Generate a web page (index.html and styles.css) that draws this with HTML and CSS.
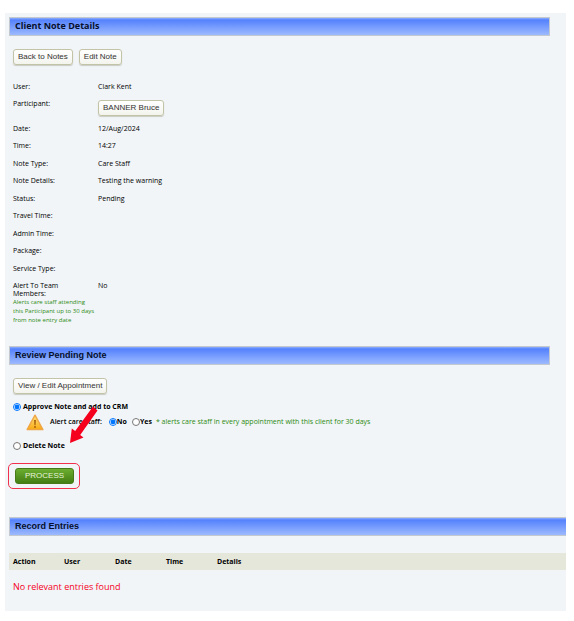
FILE: index.html
```
<!DOCTYPE html>
<html lang="en">
<head>
<meta charset="utf-8">
<title>Client Note Details</title>
<link rel="stylesheet" href="styles.css">
</head>
<body>
<div class="page">

  <h1 class="bar">Client Note Details</h1>
  <div class="actions">
    <button type="button" class="btn">Back to Notes</button>
    <button type="button" class="btn">Edit Note</button>
  </div>

  <table class="details">
    <tr><th>User:</th><td>Clark Kent</td></tr>
    <tr class="tall"><th>Participant:</th><td><button type="button" class="btn">BANNER Bruce</button></td></tr>
    <tr><th>Date:</th><td>12/Aug/2024</td></tr>
    <tr><th>Time:</th><td>14:27</td></tr>
    <tr><th>Note Type:</th><td>Care Staff</td></tr>
    <tr><th>Note Details:</th><td>Testing the warning</td></tr>
    <tr><th>Status:</th><td>Pending</td></tr>
    <tr><th>Travel Time:</th><td></td></tr>
    <tr><th>Admin Time:</th><td></td></tr>
    <tr><th>Package:</th><td></td></tr>
    <tr><th>Service Type:</th><td></td></tr>
    <tr>
      <th>Alert To Team<br>Members:
        <span class="help">Alerts care staff attending<br>this Participant up to 30 days<br>from note entry date</span>
      </th>
      <td>No</td>
    </tr>
  </table>

  <h2 class="bar">Review Pending Note</h2>
  <div class="actions">
    <button type="button" class="btn">View / Edit Appointment</button>
  </div>

  <form class="review">
    <div class="option">
      <input type="radio" id="approve" name="review" checked>
      <label for="approve">Approve Note and add to CRM</label>
    </div>
    <div class="option alert">
      <svg class="warning" viewBox="0 0 18 17" aria-hidden="true">
        <defs>
          <linearGradient id="amber" x1="0" y1="0" x2="0" y2="1">
            <stop offset="0" stop-color="#ffe680"/>
            <stop offset="1" stop-color="#f9a812"/>
          </linearGradient>
        </defs>
        <path d="M9 1.2 L16.9 15.6 H1.1 Z" fill="url(#amber)" stroke="#efa646" stroke-width="1.4" stroke-linejoin="round"/>
        <path d="M8.1 6 H9.9 L9.5 11.2 H8.5 Z" fill="#a55a08"/>
        <circle cx="9" cy="13" r="0.9" fill="#a55a08"/>
      </svg>
      <span class="question">Alert care staff:</span>
      <input type="radio" id="alert-no" name="alert" checked>
      <label for="alert-no">No</label>
      <input type="radio" id="alert-yes" name="alert">
      <label for="alert-yes">Yes</label>
      <span class="hint">* alerts care staff in every appointment with this client for 30 days</span>
    </div>
    <div class="option">
      <input type="radio" id="delete" name="review">
      <label for="delete">Delete Note</label>
    </div>
    <svg class="arrow" viewBox="0 0 29 38" aria-hidden="true">
      <path d="M24 0.5 L28.5 4.5 L11.2 29 L14.5 31.5 L1 37 L2.8 22.5 L6.2 25 Z" fill="#f5001d"/>
    </svg>
    <div class="highlight">
      <button type="button" class="process">PROCESS</button>
    </div>
  </form>

  <h2 class="bar wide">Record Entries</h2>
  <table class="entries">
    <thead>
      <tr><th>Action</th><th>User</th><th>Date</th><th>Time</th><th>Details</th></tr>
    </thead>
    <tbody>
      <tr><td colspan="5">No relevant entries found</td></tr>
    </tbody>
  </table>

</div>
</body>
</html>
```
FILE: styles.css
```
body {
  margin: 0;
  padding: 13px 8px 10px 5px;
  background: #fff;
  color: #000;
  font: 7px/8px "Trebuchet MS", "Open Sans", sans-serif;
}

.page {
  padding: 4px 0 17px 4px;
  background: #f1f5f8;
}

.bar {
  box-sizing: border-box;
  height: 19px;
  margin: 0 16px 0 0;
  padding: 0 5px;
  border: 1px solid #c3c9cf;
  background: linear-gradient(#8caeff 0, #5582fd 2px, #9dbafe 100%);
  color: #06102c;
  font: bold 9px/16px "Liberation Sans", Arial, sans-serif;
}

h1.bar {
  font-family: "Trebuchet MS", "Open Sans", sans-serif;
}

.bar.wide {
  margin-right: 0;
  border-right: 0;
}

.actions {
  display: flex;
  gap: 6px;
  padding: 13px 4px 0;
}

.btn {
  display: block;
  height: 16px;
  padding: 0 4px;
  border: 1px solid #c3c3a8;
  border-radius: 3px;
  background: linear-gradient(#fff, #f4f4ee);
  box-shadow: 0 1px 1px #c9cbc4;
  color: #333;
  font: 8px/14px "Liberation Sans", Arial, sans-serif;
}

.details {
  margin: 14px 4px 15px;
  border-collapse: collapse;
}

.details th,
.details td {
  padding: 4px 0 5px;
  text-align: left;
  vertical-align: top;
  font-weight: 500;
}

.details th {
  width: 85px;
}

.details tr:nth-child(even) th {
  padding-bottom: 6px;
}

.help {
  display: block;
  color: #2c8a12;
  font-size: 6px;
  line-height: 9px;
}

.review {
  position: relative;
  padding: 8px 4px 0;
}

.option {
  display: flex;
  align-items: center;
  height: 10px;
  font-weight: bold;
}

.option input {
  width: 8px;
  height: 8px;
  margin: 0;
}

.option > input:first-child {
  margin-right: 2px;
}

.alert {
  height: 20px;
  margin-bottom: 9px;
  padding-left: 13px;
}

.warning {
  width: 18px;
  height: 17px;
  margin-right: 6px;
}

.question {
  margin-right: 7px;
  font-weight: 600;
}

#alert-yes {
  margin-left: 5px;
}

.hint {
  margin-left: 4px;
  color: #2c8a12;
  font-weight: 500;
}

/* points at the Delete option, drawn over the labels */
.arrow {
  position: absolute;
  left: 60px;
  top: 12px;
  width: 29px;
  height: 38px;
}

.highlight {
  width: max-content;
  margin: 12px 0 28px -5px;
  padding: 4px 5px 4px 6px;
  border: 1px solid #f0304c;
  border-radius: 5px;
}

.process {
  display: block;
  width: 59px;
  height: 16px;
  padding: 0;
  border: 1px solid #467a18;
  border-radius: 3px;
  background: linear-gradient(#6cae30, #437e14);
  color: #e6f3d8;
  font: 8px/12px "Liberation Sans", Arial, sans-serif;
}

.entries {
  width: 100%;
  margin-top: 17px;
  border-collapse: collapse;
  table-layout: fixed;
}

.entries th {
  width: 47px;
  height: 17px;
  padding: 0 0 0 4px;
  background: #e5e7db;
  text-align: left;
}

.entries th:last-child {
  width: auto;
}

.entries td {
  padding: 10px 4px 0;
  color: #f5001d;
  font-size: 9px;
  line-height: 14px;
}
```
